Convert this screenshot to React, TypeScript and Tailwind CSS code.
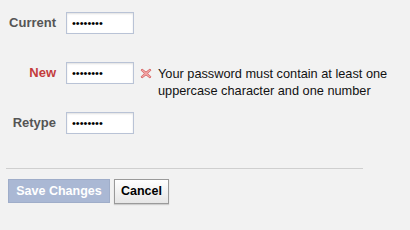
import React from 'react';

// Campo de senha com rótulo à esquerda
const PasswordRow: React.FC<{ label: string; error?: boolean; children?: React.ReactNode }> = ({ label, error, children }) => (
  <div className="flex items-start h-[22px]">
    <div className="flex items-center h-[22px]">
      <span
        className={`w-[56px] text-right text-[13px] font-bold ${error ? 'text-[#c33c3c]' : 'text-[#555555]'}`}
      >
        {label}
      </span>
      <input
        type="password"
        readOnly
        value="12345678"
        className="ml-[10px] w-[68px] h-[22px] px-[5px] bg-white border border-[#b9c3d6] shadow-[inset_0_1px_2px_rgba(0,0,0,0.12)] text-[11px] text-black outline-none"
      />
    </div>
    {children}
  </div>
);

const ErrorIcon = () => (
  <svg width="12" height="11" viewBox="0 0 12 11" className="shrink-0">
    <path
      d="M2 1 L6 4 L10 1 L11 2.2 L7.6 5.5 L11 8.8 L10 10 L6 7 L2 10 L1 8.8 L4.4 5.5 L1 2.2 Z"
      fill="#f2a5a5"
      stroke="#d25a5a"
      strokeWidth="0.8"
      strokeLinejoin="round"
    />
  </svg>
);

export default function App() {
  return (
    <div className="w-[410px] h-[230px] bg-[#f2f2f2] pt-[12px] font-['Liberation_Sans',Arial,sans-serif]">
      <div className="flex flex-col gap-[28px]">
        <PasswordRow label="Current" />
        <PasswordRow label="New" error>
          <div className="flex items-start ml-[6px] mt-[6px]">
            <ErrorIcon />
            <p className="ml-[6px] -mt-[3px] text-[12.75px] leading-[17px] text-[#111111]">
              Your password must contain at least one
              <br />
              uppercase character and one number
            </p>
          </div>
        </PasswordRow>
        <PasswordRow label="Retype" />
      </div>

      <div className="mt-[34px] ml-[6px] w-[357px] border-t border-[#cfcfcf]" />

      <div className="flex gap-[4px] ml-[8px] mt-[10px]">
        <button className="w-[102px] h-[24px] bg-[#aab8d4] border border-[#9fadc9] text-white text-[12.5px] font-bold">
          Save Changes
        </button>
        <button className="w-[55px] h-[25px] bg-gradient-to-b from-white to-[#e6e6e6] border border-[#9a9a9a] shadow-[0_1px_1px_rgba(0,0,0,0.15)] text-black text-[12.5px] font-bold">
          Cancel
        </button>
      </div>
    </div>
  );
}
